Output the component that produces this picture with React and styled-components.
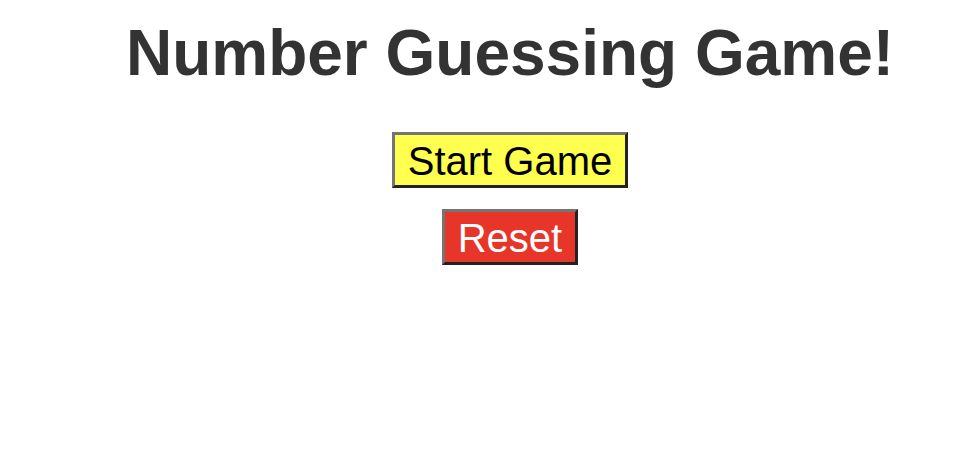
import React from 'react';
import styled, { createGlobalStyle } from 'styled-components';

const GlobalStyle = createGlobalStyle`
  html, body {
    margin: 0;
    padding: 0;
    background: #fff;
    font-family: "Liberation Sans", Arial, Helvetica, sans-serif;
  }
`;

const Page = styled.div`
  display: flex;
  flex-direction: column;
  align-items: center;
  padding: 16px 0 0 44px;
`;

const Title = styled.h1`
  margin: 0 0 42px;
  font-size: 64px;
  font-weight: bold;
  color: #333;
  line-height: normal;
`;

const Controls = styled.div`
  display: flex;
  flex-direction: column;
  align-items: center;
  gap: 21px;
`;

const Button = styled.button`
  font-family: "Liberation Sans", Arial, Helvetica, sans-serif;
  font-size: 40px;
  line-height: 46px;
  padding: 3px 13px 1px;
  margin: 0;
  background: ${({ bg }) => bg};
  color: ${({ fg }) => fg};
  border: 3px solid;
  border-color: #747474 #222 #222 #747474;
  border-radius: 0;
  cursor: pointer;
`;

const App = () => {
  return (
    <>
      <GlobalStyle />
      <Page>
        <Title>Number Guessing Game!</Title>
        <Controls>
          <Button bg="#ffff4f" fg="#000">Start Game</Button>
          <Button bg="#e8352a" fg="#fff">Reset</Button>
        </Controls>
      </Page>
    </>
  );
};

export default App;
